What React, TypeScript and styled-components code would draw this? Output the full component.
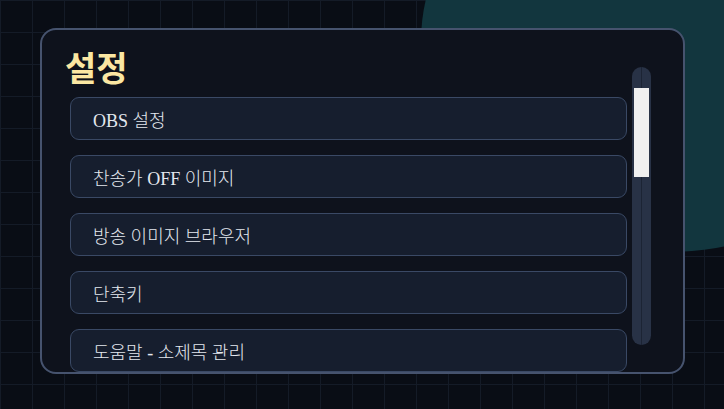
import React from "react";
import styled, { createGlobalStyle } from "styled-components";

const GlobalStyle = createGlobalStyle`
  html, body {
    margin: 0;
    padding: 0;
    width: 724px;
    height: 409px;
    overflow: hidden;
    background: #090d15;
  }
  * { box-sizing: border-box; }
`;

const Stage = styled.div`
  position: relative;
  width: 724px;
  height: 409px;
  overflow: hidden;
  background-color: #090d15;
  background-image:
    linear-gradient(to right, #141b27 1px, transparent 1px),
    linear-gradient(to bottom, #141b27 1px, transparent 1px);
  background-size: 32px 32px;
  display: flex;
  align-items: flex-start;
  padding: 28px 0 0 40px;
`;

/* soft teal glow sitting behind the settings card */
const Glow = styled.div`
  position: absolute;
  left: 421px;
  top: -170px;
  width: 494px;
  height: 422px;
  border-radius: 50%;
  background: #12363e;
`;

const Panel = styled.section`
  position: relative;
  width: 645px;
  height: 346px;
  border: 2px solid #46536e;
  border-radius: 16px;
  background: #0e121c;
  display: flex;
  gap: 5px;
  padding: 0 32px 0 23px;
  overflow: hidden;
`;

const Main = styled.div`
  flex: 1;
  display: flex;
  flex-direction: column;
  min-width: 0;
`;

const Title = styled.h1`
  margin: 15px 0 0;
  height: 55px;
  font-family: "Noto Sans CJK KR", "Noto Sans", sans-serif;
  font-weight: 700;
  font-size: 34px;
  line-height: 44px;
  color: #fbe7a2;
`;

const List = styled.ul`
  list-style: none;
  margin: 0;
  padding: 0 0 0 5px;
  display: flex;
  flex-direction: column;
  gap: 15px;
`;

const Item = styled.li`
  flex: none;
  height: 43px;
  border: 1px solid #3a4965;
  border-radius: 9px;
  background: #161e2e;
  display: flex;
  align-items: center;
  padding-left: 22px;
  font-family: "Liberation Serif", "Noto Sans CJK KR", serif;
  font-weight: 300;
  font-size: 18px;
  color: #e4e8ef;
`;

const Rail = styled.div`
  flex: none;
  width: 19px;
  margin: 37px 0 27px;
  border-radius: 10px;
  background: linear-gradient(
    to right,
    #283246 0,
    #283246 9px,
    #1c2434 9px,
    #1c2434 10px,
    #283246 10px
  );
  display: flex;
  flex-direction: column;
  padding: 21px 2px 0;
`;

const Thumb = styled.div`
  height: 89px;
  background: #f0f0f0;
`;

const entries = [
  "OBS 설정",
  "찬송가 OFF 이미지",
  "방송 이미지 브라우저",
  "단축키",
  "도움말 - 소제목 관리",
];

export default function App() {
  return (
    <>
      <GlobalStyle />
      <Stage>
        <Glow />
        <Panel>
          <Main>
            <Title>설정</Title>
            <List>
              {entries.map((label) => (
                <Item key={label}>{label}</Item>
              ))}
            </List>
          </Main>
          <Rail>
            <Thumb />
          </Rail>
        </Panel>
      </Stage>
    </>
  );
}
